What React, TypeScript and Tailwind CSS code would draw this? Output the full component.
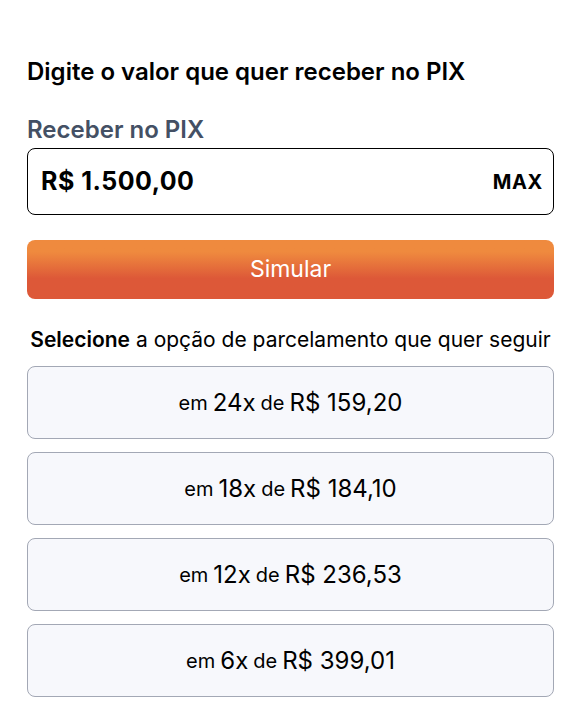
const OPTIONS = [
  { n: 24, value: '159,20' },
  { n: 18, value: '184,10' },
  { n: 12, value: '236,53' },
  { n: 6, value: '399,01' },
]

export default function App() {
  return (
    <div className="min-h-[722px] bg-white pl-[27px] pr-[34px] pt-[56px] font-['Inter',sans-serif] text-black">
      <h1 className="text-[24px] font-semibold leading-[32px]">Digite o valor que quer receber no PIX</h1>

      <label className="mt-[26px] block text-[24px] font-semibold leading-[32px] text-[#445064]">Receber no PIX</label>
      <div className="mt-[2px] flex h-[67px] items-center justify-between rounded-[8px] border border-black pl-[13px] pr-[10px]">
        <span className="text-[25px] font-bold tracking-[0.5px]">R$ 1.500,00</span>
        <span className="text-[20px] font-bold tracking-[0.6px]">MAX</span>
      </div>

      <button className="mt-[25px] flex h-[59px] w-full items-center justify-center rounded-[8px] bg-gradient-to-b from-[#ef8a3e] from-[20%] to-[#dd5838] to-[65%] text-[23px] text-white">
        Simular
      </button>

      <p className="mt-[27px] text-center text-[21px] leading-[28px]">
        <span className="font-semibold">Selecione</span> a opção de parcelamento que quer seguir
      </p>

      <div className="mt-[12px] flex flex-col gap-[13px]">
        {OPTIONS.map((o) => (
          <button
            key={o.n}
            className="flex h-[73px] w-full items-center justify-center rounded-[8px] border border-[#a3a8b5] bg-[#f7f8fc]"
          >
            <span className="text-[20px]">em</span>
            <span className="ml-[5px] text-[24px]">{o.n}x</span>
            <span className="ml-[5px] text-[20px]">de</span>
            <span className="ml-[5px] text-[24px]">R$ {o.value}</span>
          </button>
        ))}
      </div>
    </div>
  )
}
